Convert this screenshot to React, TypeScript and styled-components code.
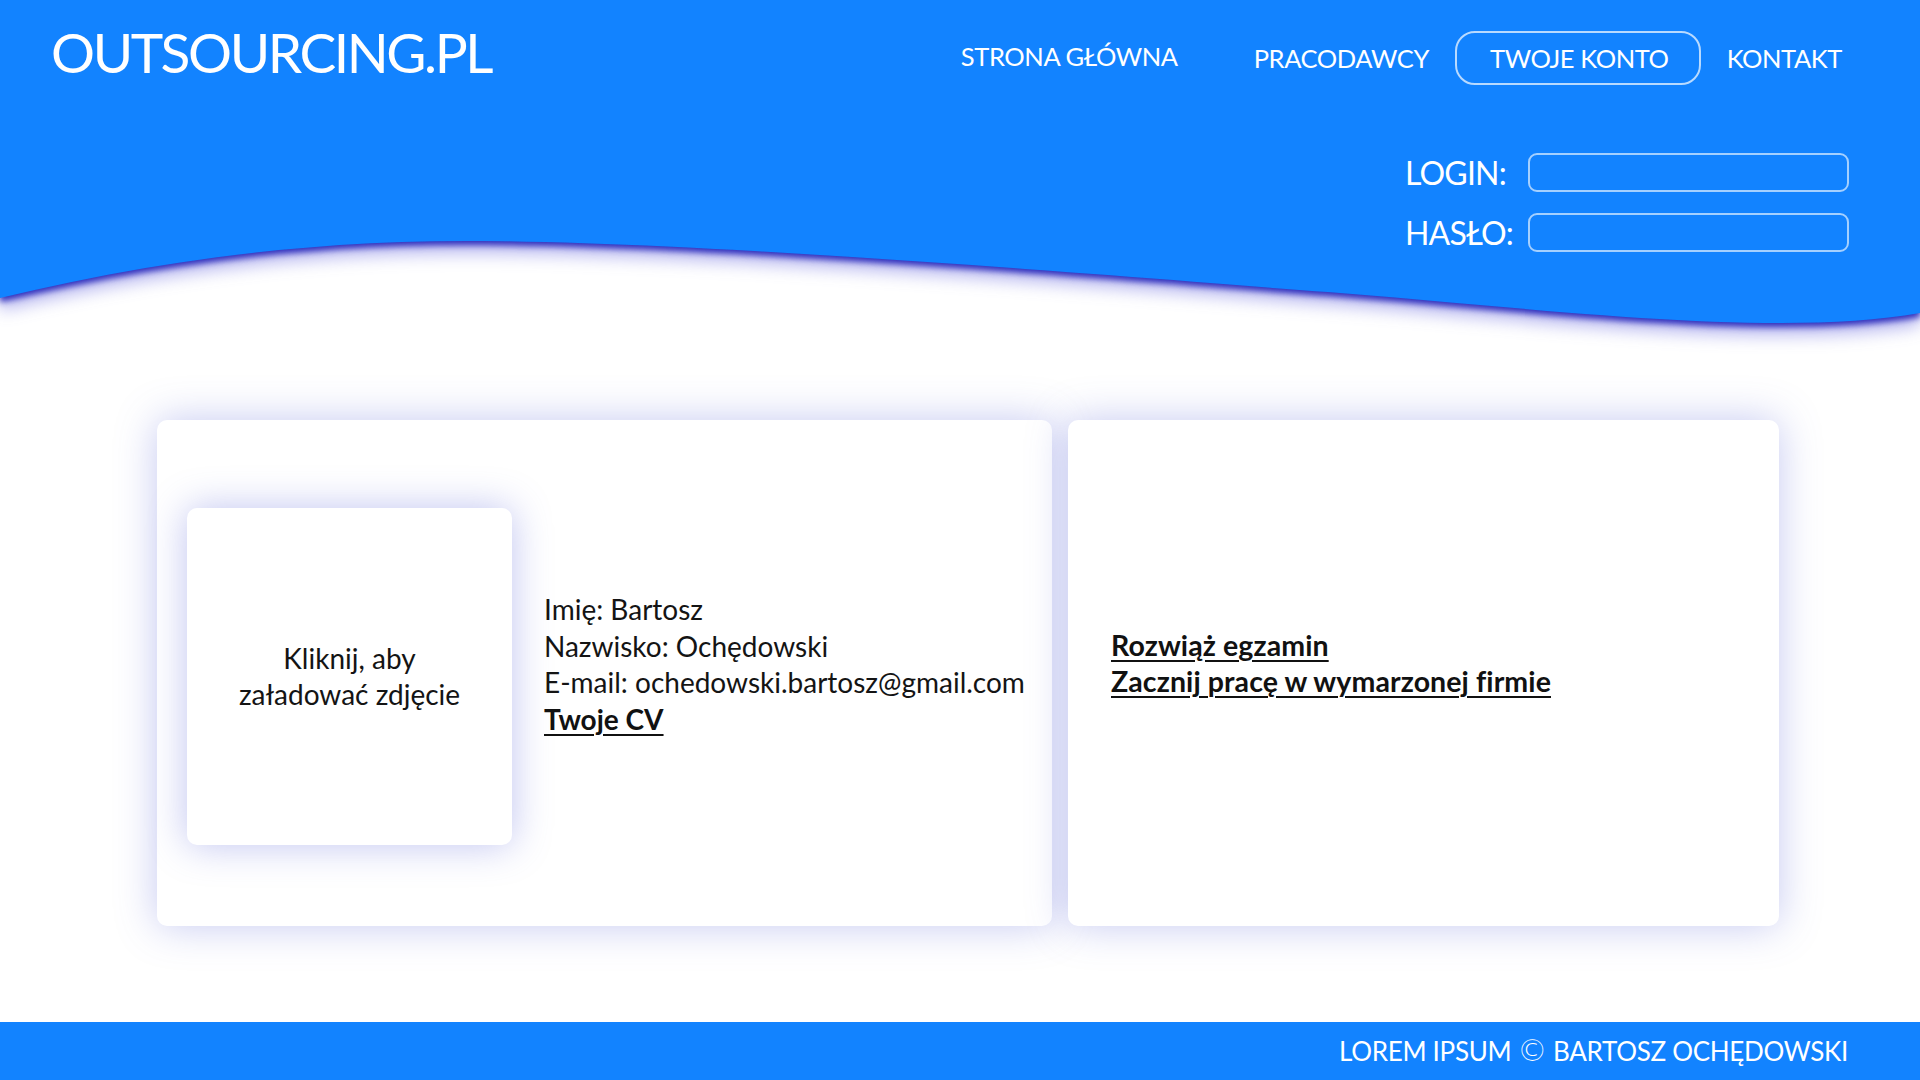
import React from "react";
import styled, { createGlobalStyle } from "styled-components";

const blue = "#1283ff";

const GlobalStyle = createGlobalStyle`
  html, body {
    margin: 0;
    padding: 0;
    background: #ffffff;
  }
  body {
    font-family: Lato, "Open Sans", Arial, sans-serif;
    color: #141414;
  }
  * {
    box-sizing: border-box;
  }
`;

const Page = styled.div`
  display: flex;
  flex-direction: column;
  height: 1080px;
  overflow: hidden;
`;

const Header = styled.header`
  position: relative;
  height: 340px;
  flex-shrink: 0;
`;

const WaveBg = styled.svg`
  position: absolute;
  left: 0;
  top: 0;
  width: 100%;
  height: 360px;
  z-index: 0;
  filter: drop-shadow(0 4px 3px rgba(38, 38, 185, 0.95))
    drop-shadow(0 8px 8px rgba(70, 70, 215, 0.4));
`;

const HeaderContent = styled.div`
  position: relative;
  z-index: 1;
  display: flex;
  flex-direction: column;
`;

const TopBar = styled.div`
  display: flex;
  align-items: center;
  justify-content: space-between;
  padding: 31px 76px 0 51px;
  height: 85px;
`;

const Logo = styled.h1`
  margin: 0 0 12px;
  font-size: 55px;
  line-height: 54px;
  font-weight: 400;
  letter-spacing: -2.4px;
  color: #ffffff;
`;

const Nav = styled.nav`
  display: flex;
  align-items: center;
  gap: 24px;
`;

const NavLink = styled.a<{ $active?: boolean; $lift?: boolean }>`
  display: flex;
  align-items: center;
  height: 54px;
  padding: ${(p) => (p.$active ? "0 30px 0 33px" : "0")};
  margin-right: ${(p) => (p.$lift ? "48px" : "0")};
  margin-top: ${(p) => (p.$lift ? "-5px" : "0")};
  border: 2px solid
    ${(p) => (p.$active ? "rgba(255, 255, 255, 0.7)" : "transparent")};
  border-radius: 20px;
  font-size: 25.5px;
  letter-spacing: -0.4px;
  color: #ffffff;
  text-decoration: none;
  white-space: nowrap;
`;

const LoginForm = styled.form`
  align-self: flex-end;
  display: grid;
  grid-template-columns: auto 321px;
  column-gap: 15px;
  row-gap: 21px;
  align-items: center;
  margin: 68px 71px 0 0;
`;

const FieldLabel = styled.label`
  font-size: 32px;
  letter-spacing: -0.8px;
  color: #ffffff;
  line-height: 39px;
`;

const FieldInput = styled.input`
  height: 39px;
  width: 100%;
  border: 2px solid rgba(255, 255, 255, 0.62);
  border-radius: 9px;
  background: transparent;
  color: #ffffff;
  font: inherit;
  font-size: 20px;
  padding: 0 10px;
  outline: none;
`;

const Main = styled.main`
  flex: 1;
  display: flex;
  gap: 16px;
  padding: 80px 0 0 157px;
`;

const Card = styled.section<{ $width: number }>`
  width: ${(p) => p.$width}px;
  height: 506px;
  background: #ffffff;
  border-radius: 10px;
  box-shadow: 0 0 40px rgba(86, 96, 215, 0.34);
  display: flex;
  align-items: center;
`;

const ProfileCard = styled(Card)`
  padding: 0 0 0 30px;
  gap: 32px;
`;

const TaskCard = styled(Card)`
  padding: 0 0 20px 43px;
`;

const PhotoBox = styled.button`
  width: 325px;
  height: 337px;
  flex-shrink: 0;
  margin-top: 6px;
  border: none;
  border-radius: 10px;
  background: #ffffff;
  box-shadow: 0 0 38px rgba(86, 96, 215, 0.38);
  font-family: inherit;
  font-size: 28px;
  line-height: 36px;
  color: #141414;
  padding: 0 44px;
  cursor: pointer;
`;

const InfoList = styled.div`
  display: flex;
  flex-direction: column;
  margin-bottom: 18px;
  font-size: 28px;
  line-height: 36.5px;
`;

const InfoLine = styled.span`
  white-space: nowrap;
`;

const TextLink = styled.a`
  font-weight: 700;
  color: #111111;
  text-decoration: underline;
  text-decoration-thickness: 2px;
  text-underline-offset: 4px;
  width: fit-content;
  white-space: nowrap;
`;

const TaskList = styled.div`
  display: flex;
  flex-direction: column;
  font-size: 28.5px;
  line-height: 36.5px;
  letter-spacing: 0.1px;
`;

const Footer = styled.footer`
  height: 58px;
  flex-shrink: 0;
  background: ${blue};
  display: flex;
  align-items: center;
  justify-content: flex-end;
  padding: 0 72px 0 0;
  color: #ffffff;
  font-size: 26px;
  letter-spacing: -0.3px;
`;

const Copy = styled.span`
  font-family: "DejaVu Sans", sans-serif;
  font-size: 30px;
  font-weight: 300;
  margin: 0 6px;
  line-height: 1;
`;

const navItems = [
  { label: "STRONA GŁÓWNA", lift: true },
  { label: "PRACODAWCY" },
  { label: "TWOJE KONTO", active: true },
  { label: "KONTAKT" },
];

export default function App() {
  return (
    <Page>
      <GlobalStyle />
      <Header>
        <WaveBg viewBox="0 0 1920 360" preserveAspectRatio="none" aria-hidden>
          <path
            fill={blue}
            d="M0,298 C150,262 300,241 465,241 C700,241 1100,275 1340,293 C1550,310 1780,338 1920,313 V0 H0 Z"
          />
        </WaveBg>
        <HeaderContent>
          <TopBar>
            <Logo>OUTSOURCING.PL</Logo>
            <Nav>
              {navItems.map((item) => (
                <NavLink
                  key={item.label}
                  href="#"
                  $active={item.active}
                  $lift={item.lift}
                >
                  {item.label}
                </NavLink>
              ))}
            </Nav>
          </TopBar>
          <LoginForm onSubmit={(e) => e.preventDefault()}>
            <FieldLabel htmlFor="login">LOGIN:</FieldLabel>
            <FieldInput id="login" type="text" />
            <FieldLabel htmlFor="haslo">HASŁO:</FieldLabel>
            <FieldInput id="haslo" type="password" />
          </LoginForm>
        </HeaderContent>
      </Header>

      <Main>
        <ProfileCard $width={895}>
          <PhotoBox type="button">Kliknij, aby załadować zdjęcie</PhotoBox>
          <InfoList>
            <InfoLine>Imię: Bartosz</InfoLine>
            <InfoLine>Nazwisko: Ochędowski</InfoLine>
            <InfoLine>E-mail: ochedowski.bartosz@gmail.com</InfoLine>
            <TextLink href="#">Twoje CV</TextLink>
          </InfoList>
        </ProfileCard>
        <TaskCard $width={711}>
          <TaskList>
            <TextLink href="#">Rozwiąż egzamin</TextLink>
            <TextLink href="#">Zacznij pracę w wymarzonej firmie</TextLink>
          </TaskList>
        </TaskCard>
      </Main>

      <Footer>
        LOREM IPSUM<Copy>©</Copy>BARTOSZ OCHĘDOWSKI
      </Footer>
    </Page>
  );
}
